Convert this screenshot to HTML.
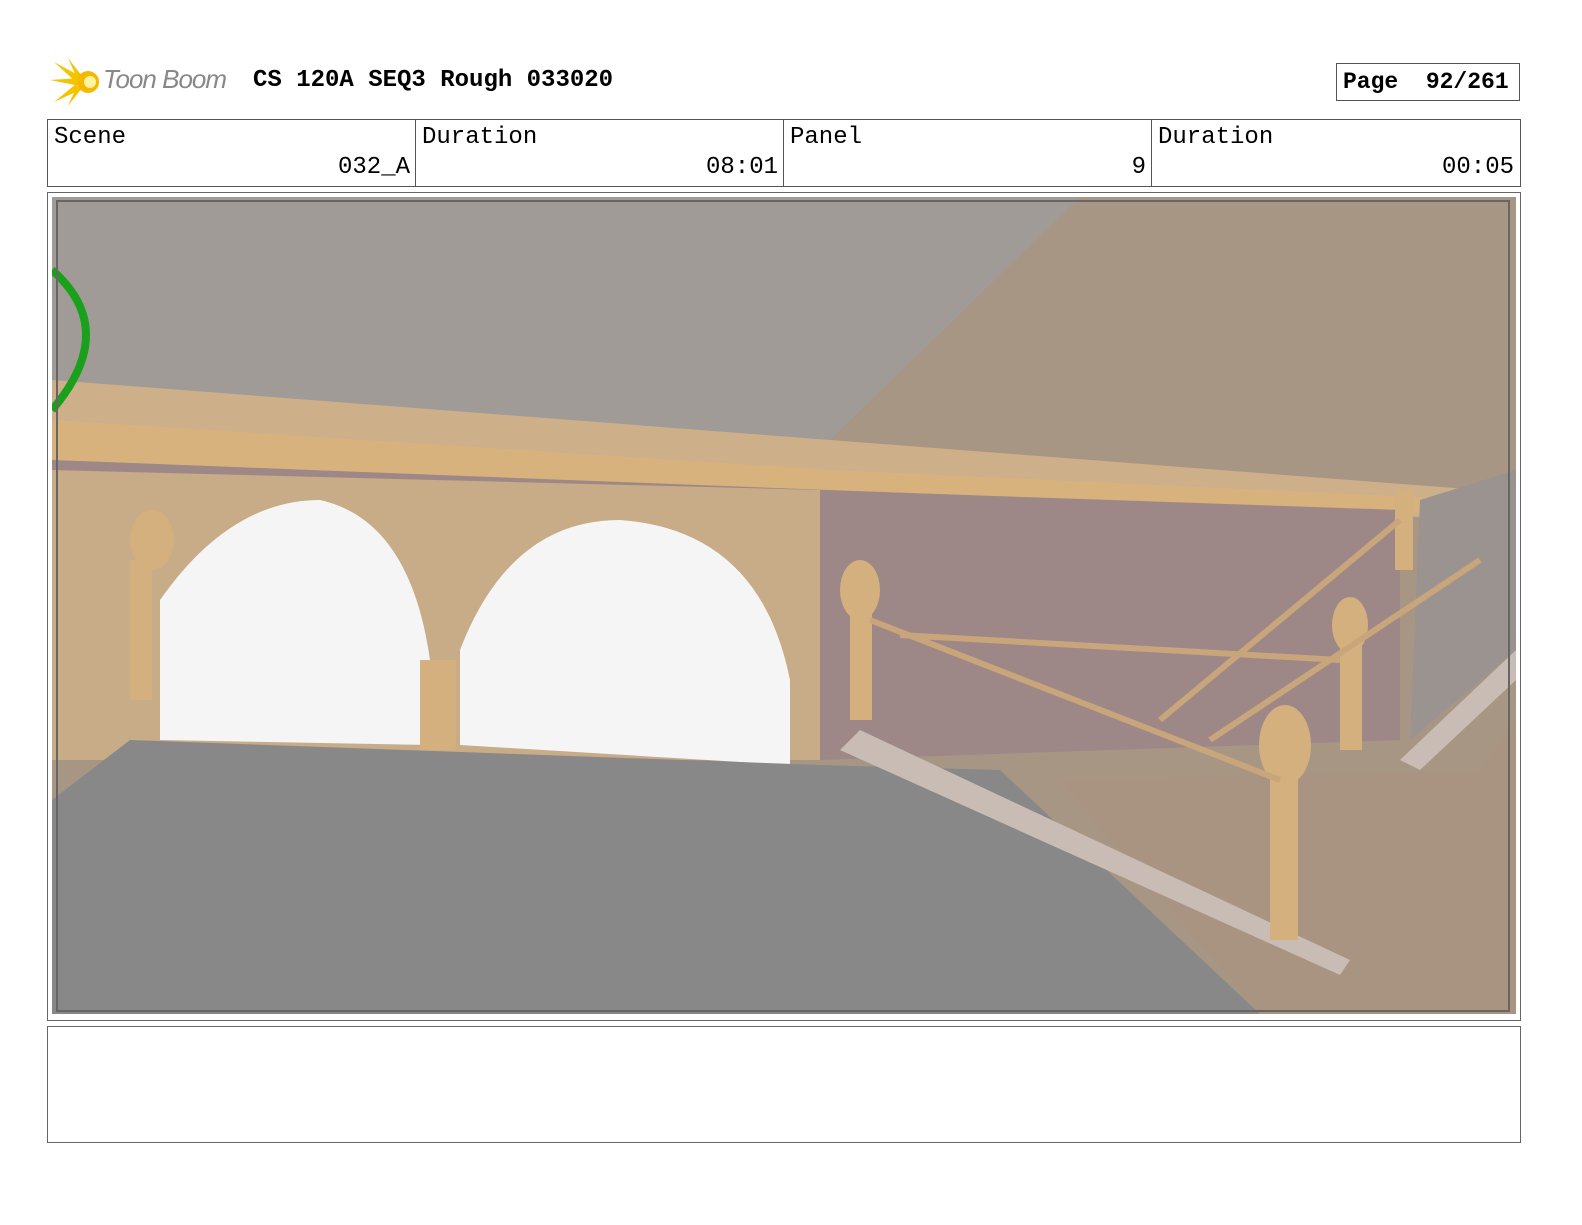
<!DOCTYPE html>
<html><head><style>
body{margin:0;background:#fff;width:1582px;height:1225px;position:relative;font-family:"Liberation Mono",monospace;overflow:hidden}
.a{position:absolute}
.cell{position:absolute;top:120px;height:66px;border-right:1px solid #555;font-size:24px}
.cell .l{position:absolute;left:6px;top:4px}
.cell .v{position:absolute;right:5px;top:34px}
</style></head><body>
<svg class="a" style="left:50px;top:56px" width="52" height="52" viewBox="0 0 52 52">
<g fill="#f5c400"><polygon points="4,6 30,20 26,26"/><polygon points="0,24 30,22 30,30"/><polygon points="4,46 26,28 30,34"/><polygon points="18,2 32,20 26,20"/><polygon points="18,50 32,32 26,32"/></g>
<circle cx="38" cy="26" r="11" fill="#f5b800"/><circle cx="40" cy="26" r="6" fill="#fff3a0"/></svg>
<div class="a" style="left:103px;top:64px;font:italic 26px 'Liberation Sans',sans-serif;color:#888;letter-spacing:-1px">Toon Boom</div>
<div class="a" style="left:253px;top:67px;font-weight:bold;font-size:24px">CS 120A SEQ3 Rough 033020</div>
<div class="a" style="left:1336px;top:63px;width:184px;height:38px;border:1px solid #555;box-sizing:border-box;font-weight:bold;font-size:23px;line-height:36px;padding-left:6px">Page &nbsp;92/261</div>
<div class="a" style="left:47px;top:119px;width:1474px;height:68px;border:1px solid #555;box-sizing:border-box"></div>
<div class="cell" style="left:48px;width:367px"><span class="l">Scene</span><span class="v">032_A</span></div>
<div class="cell" style="left:416px;width:367px"><span class="l">Duration</span><span class="v">08:01</span></div>
<div class="cell" style="left:784px;width:367px"><span class="l">Panel</span><span class="v">9</span></div>
<div class="cell" style="left:1152px;width:367px;border:none"><span class="l">Duration</span><span class="v">00:05</span></div>
<div class="a" style="left:47px;top:192px;width:1474px;height:829px;border:1px solid #666;box-sizing:border-box"></div>
<svg class="a" style="left:52px;top:197px" width="1464" height="817" viewBox="52 197 1464 817">
<rect x="52" y="197" width="1464" height="817" fill="#a89684"/>
<polygon points="52,197 1080,197 830,440 52,400" fill="#a09b97"/>
<polygon points="52,380 830,440 1480,490 1480,520 52,450" fill="#cdb08a"/>
<polygon points="52,420 830,470 1480,500 1480,515 52,460" fill="#d8b27d"/>
<polygon points="52,460 820,490 1400,510 1400,740 820,760 52,740" fill="#9e8787"/>
<polygon points="52,470 820,490 820,760 52,760" fill="#c8ab87"/>
<path d="M160,740 L160,600 Q230,500 320,500 Q410,520 430,660 L430,745 Z" fill="#f5f5f5"/>
<path d="M460,745 L460,650 Q510,520 620,520 Q760,530 790,680 L790,765 Z" fill="#f5f5f5"/>
<polygon points="52,800 130,740 820,765 1000,770 1260,1014 52,1014" fill="#888888"/>
<polygon points="1060,780 1480,770 1516,720 1516,1014 1260,1014" fill="#a89480"/>
<polygon points="860,730 1350,960 1340,975 840,750" fill="#c9bcb4"/>
<polygon points="1400,760 1516,650 1516,680 1420,770" fill="#c9bcb4"/>
<polygon points="1420,500 1516,470 1516,650 1410,740" fill="#9a9390"/>
<path d="M52,270 Q120,330 52,410" stroke="#1aa01a" stroke-width="8" fill="none"/>
<g fill="#d4b07e"><rect x="850" y="600" width="22" height="120"/><rect x="1270" y="760" width="28" height="180"/><rect x="1340" y="630" width="22" height="120"/><rect x="130" y="560" width="22" height="140"/><rect x="420" y="660" width="36" height="90"/><rect x="1395" y="490" width="18" height="80"/>
<ellipse cx="860" cy="590" rx="20" ry="30"/><ellipse cx="1285" cy="745" rx="26" ry="40"/><ellipse cx="1350" cy="625" rx="18" ry="28"/><ellipse cx="152" cy="540" rx="22" ry="30"/></g>
<g stroke="#c8a57a" stroke-width="6"><line x1="870" y1="620" x2="1280" y2="780"/><line x1="1160" y1="720" x2="1400" y2="520"/><line x1="900" y1="635" x2="1340" y2="660"/><line x1="1210" y1="740" x2="1480" y2="560"/></g>
<rect x="57" y="201" width="1452" height="810" fill="none" stroke="#666" stroke-width="2"/>
</svg>
<div class="a" style="left:47px;top:1026px;width:1474px;height:117px;border:1px solid #666;box-sizing:border-box"></div>
</body></html>
